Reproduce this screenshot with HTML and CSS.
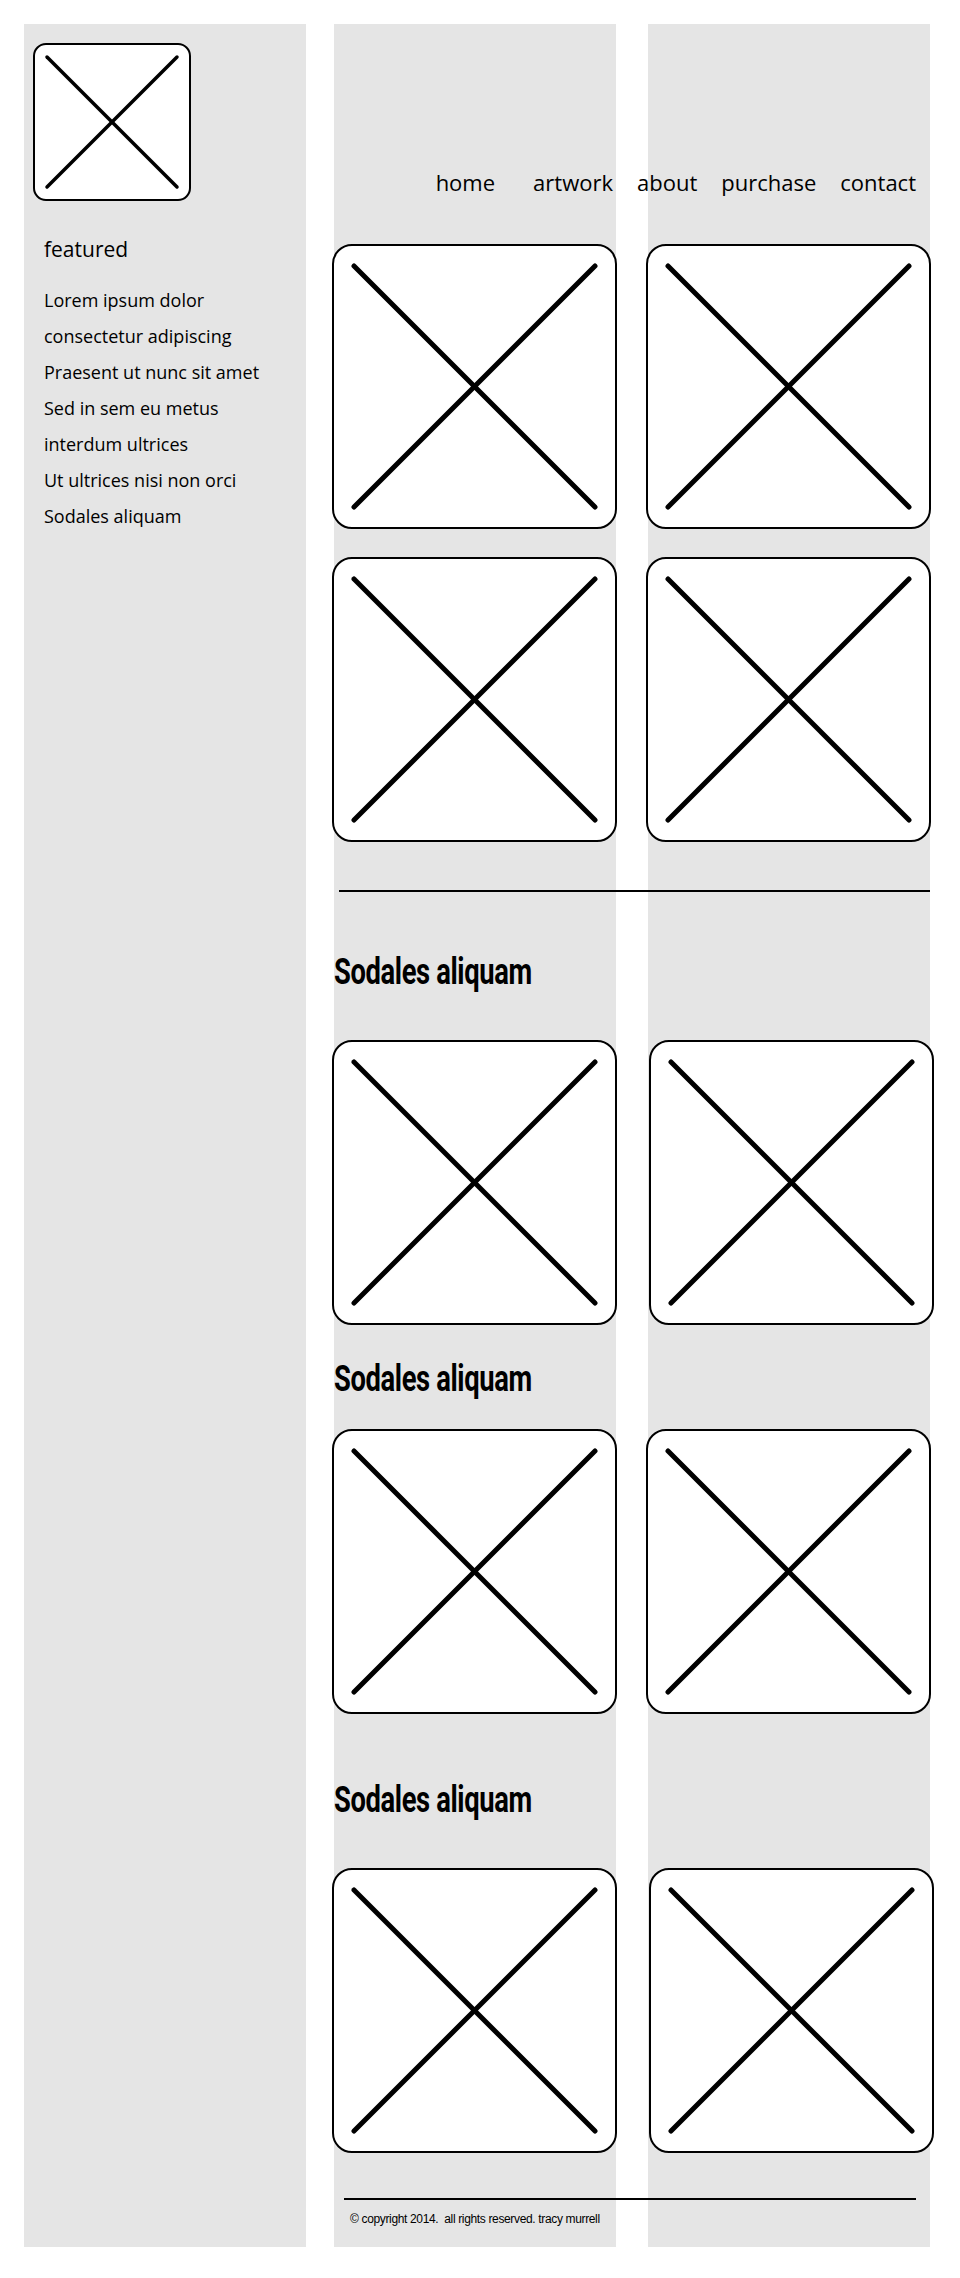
FILE: index.html
```html
<!DOCTYPE html>
<html lang="en">
<head>
    <meta charset="UTF-8">
    <meta name="viewport" content="width=device-width, initial-scale=1.0">
    <title>Tracy Murrell</title>
    <link rel="stylesheet" href="styles.css">
</head>
<body>

<div class="page">
    <aside class="sidebar">
        <div class="logo">
            <svg viewBox="0 0 154 154"><line x1="12" y1="12" x2="142" y2="142"/><line x1="142" y1="12" x2="12" y2="142"/></svg>
        </div>
        <h2 class="featured-title">featured</h2>
        <ul class="featured-list">
            <li>Lorem ipsum dolor</li>
            <li>consectetur adipiscing</li>
            <li>Praesent ut nunc sit amet</li>
            <li>Sed in sem eu metus</li>
            <li>interdum ultrices</li>
            <li>Ut ultrices nisi non orci</li>
            <li>Sodales aliquam</li>
        </ul>
    </aside>

    <main class="main">
        <nav class="nav">
            <a href="#">home</a>
            <a href="#">artwork</a>
            <a href="#">about</a>
            <a href="#">purchase</a>
            <a href="#">contact</a>
        </nav>

        <div class="gallery first-gallery">
            <div class="card"><svg viewBox="0 0 281 281"><line x1="20" y1="20" x2="261" y2="261"/><line x1="261" y1="20" x2="20" y2="261"/></svg></div>
            <div class="card"><svg viewBox="0 0 281 281"><line x1="20" y1="20" x2="261" y2="261"/><line x1="261" y1="20" x2="20" y2="261"/></svg></div>
            <div class="card"><svg viewBox="0 0 281 281"><line x1="20" y1="20" x2="261" y2="261"/><line x1="261" y1="20" x2="20" y2="261"/></svg></div>
            <div class="card"><svg viewBox="0 0 281 281"><line x1="20" y1="20" x2="261" y2="261"/><line x1="261" y1="20" x2="20" y2="261"/></svg></div>
        </div>

        <hr class="divider">

        <h2 class="section-title title-one">Sodales aliquam</h2>
        <div class="gallery wide">
            <div class="card"><svg viewBox="0 0 281 281"><line x1="20" y1="20" x2="261" y2="261"/><line x1="261" y1="20" x2="20" y2="261"/></svg></div>
            <div class="card"><svg viewBox="0 0 281 281"><line x1="20" y1="20" x2="261" y2="261"/><line x1="261" y1="20" x2="20" y2="261"/></svg></div>
        </div>

        <h2 class="section-title title-two">Sodales aliquam</h2>
        <div class="gallery">
            <div class="card"><svg viewBox="0 0 281 281"><line x1="20" y1="20" x2="261" y2="261"/><line x1="261" y1="20" x2="20" y2="261"/></svg></div>
            <div class="card"><svg viewBox="0 0 281 281"><line x1="20" y1="20" x2="261" y2="261"/><line x1="261" y1="20" x2="20" y2="261"/></svg></div>
        </div>

        <h2 class="section-title title-three">Sodales aliquam</h2>
        <div class="gallery wide">
            <div class="card"><svg viewBox="0 0 281 281"><line x1="20" y1="20" x2="261" y2="261"/><line x1="261" y1="20" x2="20" y2="261"/></svg></div>
            <div class="card"><svg viewBox="0 0 281 281"><line x1="20" y1="20" x2="261" y2="261"/><line x1="261" y1="20" x2="20" y2="261"/></svg></div>
        </div>

        <footer class="footer">
            <hr class="footer-rule">
            <p class="copyright">&copy; copyright 2014.&nbsp; all rights reserved. tracy murrell</p>
        </footer>
    </main>
</div>

</body>
</html>
```

FILE: styles.css
```css
body {
    font-family: "Open Sans", Arial, sans-serif;
    background-color: #fff;
    color: #000;
    margin: 0;
    padding: 0;
}

.page {
    display: flex;
    gap: 28px;
    padding: 24px 30px 32px 24px;
}

/* left column */
.sidebar {
    width: 282px;
    flex-shrink: 0;
    background-color: #e5e5e5;
    padding-top: 19px;
}

.logo {
    width: 154px;
    height: 154px;
    margin-left: 9px;
    background-color: #fff;
    border: 2px solid #000;
    border-radius: 13px;
}

.logo svg {
    display: block;
    width: 100%;
    height: 100%;
}

.logo line {
    stroke: #000;
    stroke-width: 3.5;
    stroke-linecap: round;
}

.featured-title {
    margin: 34px 0 0 20px;
    font-size: 21px;
    font-weight: normal;
    line-height: 28px;
}

.featured-list {
    list-style-type: none;
    margin: 19px 0 0 20px;
    padding: 0;
    font-size: 18px;
    line-height: 36px;
}

/* right area: two grey stripes */
.main {
    width: 596px;
    flex-shrink: 0;
    padding-top: 144px;
    padding-bottom: 21px;
    background: linear-gradient(to right, #e5e5e5 0, #e5e5e5 282px, #fff 282px, #fff 314px, #e5e5e5 314px);
}

.nav {
    display: flex;
    justify-content: flex-end;
    gap: 24px;
    padding-right: 14px;
    font-size: 22px;
    line-height: 28px;
}

.nav a {
    color: #000;
    text-decoration: none;
}

.nav a:first-child {
    margin-right: 14px;
}

.gallery {
    display: grid;
    grid-template-columns: 285px 285px;
    column-gap: 29px;
    row-gap: 28px;
    margin-left: -2px;
}

.gallery.wide {
    column-gap: 32px;
}

.first-gallery {
    margin-top: 48px;
}

.card {
    width: 281px;
    height: 281px;
    background-color: #fff;
    border: 2px solid #000;
    border-radius: 20px;
}

.card svg {
    display: block;
    width: 100%;
    height: 100%;
}

.card line {
    stroke: #000;
    stroke-width: 5;
    stroke-linecap: round;
}

.divider {
    margin: 48px 0 0 5px;
    border: none;
    border-top: 2px solid #000;
}

/* condensed bold headings */
.section-title {
    margin: 0;
    font-family: Roboto, "Liberation Sans", sans-serif;
    font-weight: bold;
    font-size: 36px;
    line-height: 40px;
    letter-spacing: -0.5px;
    transform: scaleX(0.76);
    transform-origin: left center;
}

.title-one {
    margin: 60px 0 48px;
}

.title-two {
    margin: 34px 0 30px;
}

.title-three {
    margin: 66px 0 48px;
}

.footer {
    margin-top: 45px;
}

.footer-rule {
    margin: 0 14px 0 10px;
    border: none;
    border-top: 2px solid #000;
}

.copyright {
    margin: 12px 0 0 16px;
    font-family: "Liberation Sans", Arial, sans-serif;
    font-size: 12px;
    line-height: 14px;
    letter-spacing: -0.35px;
}
```
